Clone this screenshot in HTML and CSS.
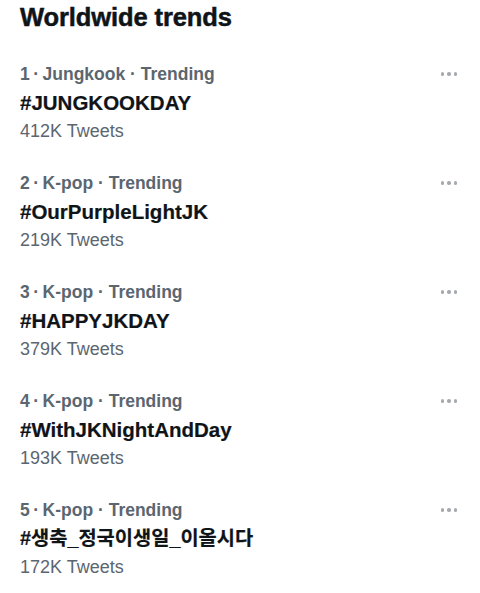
FILE: index.html
```html
<!DOCTYPE html>
<html>
<head>
<meta charset="utf-8">
<link rel="stylesheet" href="styles.css">
</head>
<body>
<div class="page">
  <h1 class="title">Worldwide trends</h1>
  <div class="list">
    <div class="trend">
      <div class="info">
        <div class="meta">1&#8201;·&#8201;Jungkook · Trending</div>
        <div class="tag">#JUNGKOOKDAY</div>
        <div class="count">412K Tweets</div>
      </div>
      <div class="more"><span></span><span></span><span></span></div>
    </div>
    <div class="trend">
      <div class="info">
        <div class="meta">2&#8201;·&#8201;K-pop · Trending</div>
        <div class="tag">#OurPurpleLightJK</div>
        <div class="count">219K Tweets</div>
      </div>
      <div class="more"><span></span><span></span><span></span></div>
    </div>
    <div class="trend">
      <div class="info">
        <div class="meta">3&#8201;·&#8201;K-pop · Trending</div>
        <div class="tag">#HAPPYJKDAY</div>
        <div class="count">379K Tweets</div>
      </div>
      <div class="more"><span></span><span></span><span></span></div>
    </div>
    <div class="trend">
      <div class="info">
        <div class="meta">4&#8201;·&#8201;K-pop · Trending</div>
        <div class="tag">#WithJKNightAndDay</div>
        <div class="count">193K Tweets</div>
      </div>
      <div class="more"><span></span><span></span><span></span></div>
    </div>
    <div class="trend">
      <div class="info">
        <div class="meta">5&#8201;·&#8201;K-pop · Trending</div>
        <div class="tag tag-ko">#생축_정국이생일_이올시다</div>
        <div class="count">172K Tweets</div>
      </div>
      <div class="more"><span></span><span></span><span></span></div>
    </div>
  </div>
</div>
</body>
</html>
```

FILE: styles.css
```css
html, body {
  margin: 0;
  padding: 0;
  background: #ffffff;
}
.page {
  padding: 0 20px 0 20px;
  font-family: "Liberation Sans", "Noto Sans CJK KR", sans-serif;
  color: #0f1419;
}
.title {
  margin: 0;
  padding-top: 1px;
  font-size: 25.5px;
  line-height: 32px;
  font-weight: 700;
  letter-spacing: -0.1px;
  -webkit-text-stroke: 0.5px #0f1419;
}
.list {
  display: flex;
  flex-direction: column;
  gap: 24px;
  padding-top: 27px;
}
.trend {
  display: flex;
  justify-content: space-between;
  align-items: flex-start;
}
.info {
  display: flex;
  flex-direction: column;
}
.meta {
  font-size: 17.5px;
  line-height: 28px;
  font-weight: 700;
  color: #5b6670;
}
.tag {
  font-size: 20.5px;
  line-height: 29px;
  font-weight: 700;
  color: #0f1419;
  -webkit-text-stroke: 0.2px #0f1419;
}
.tag-ko {
  font-size: 19.8px;
}
.count {
  font-size: 18px;
  line-height: 28px;
  color: #5b6670;
}
.more {
  display: flex;
  gap: 3px;
  padding-top: 12px;
  padding-right: 3px;
}
.more span {
  width: 3.5px;
  height: 3.5px;
  border-radius: 50%;
  background: #a6a9ad;
}
```
